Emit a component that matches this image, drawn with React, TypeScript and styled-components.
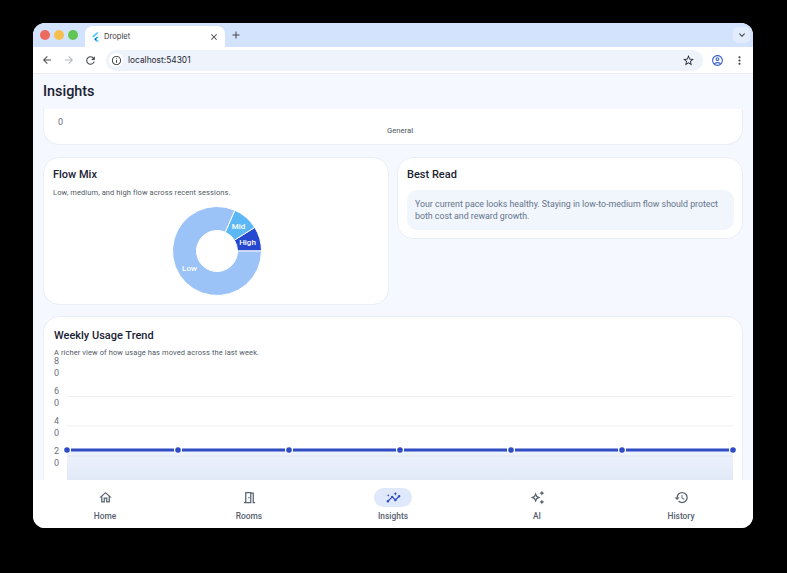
import styled, { createGlobalStyle } from "styled-components";
import {
  MdAdd, MdArrowBack, MdArrowForward, MdClose, MdExpandMore, MdHistory, MdInfoOutline, MdInsights,
  MdMoreVert, MdOutlineAccountCircle, MdOutlineAutoAwesome, MdOutlineHome, MdOutlineMeetingRoom,
  MdRefresh, MdStarBorder,
} from "react-icons/md";
import type { ReactNode } from "react";

const GlobalStyle = createGlobalStyle`
  html, body { margin: 0; height: 100%; background: #000; overflow: hidden; }
  body { font-family: Roboto, "Liberation Sans", sans-serif; }
  * { box-sizing: border-box; }
`;

const Stage = styled.div`
  width: 787px;
  height: 573px;
  padding: 23px 34px 45px 33px;
`;

const BrowserWindow = styled.div`
  height: 100%;
  display: flex;
  flex-direction: column;
  border-radius: 12px;
  overflow: hidden;
  background: #f5f8fe;
`;

const TabStrip = styled.div`
  height: 24px;
  flex: none;
  display: flex;
  align-items: flex-end;
  padding-left: 7px;
  background: #d3e3fd;
`;

const Lights = styled.div`
  display: flex;
  gap: 4px;
  align-self: center;
  margin-right: 7px;
`;

const Light = styled.span<{ $color: string }>`
  width: 10px;
  height: 10px;
  border-radius: 50%;
  background: ${(p) => p.$color};
`;

const Tab = styled.div`
  width: 140px;
  height: 21px;
  display: flex;
  align-items: center;
  padding: 0 6px;
  gap: 4px;
  background: #fff;
  border-radius: 8px 8px 0 0;
  font: 400 7.6px Inter, sans-serif;
  color: #3c4043;
`;

const TabTitle = styled.span`
  flex: 1;
`;

const NewTab = styled.span`
  display: flex;
  align-self: center;
  margin-left: 5px;
  color: #444746;
`;

const TabMenu = styled.span`
  margin-left: auto;
  margin-right: 3px;
  width: 17px;
  height: 16px;
  align-self: center;
  display: flex;
  align-items: center;
  justify-content: center;
  border-radius: 5px;
  background: #e2ecfd;
  color: #3c4043;
`;

const Toolbar = styled.div`
  height: 27px;
  flex: none;
  display: flex;
  align-items: center;
  padding: 0 6px 0 7px;
  background: #fff;
  border-bottom: 1px solid #e8ecf2;
`;

const ToolButton = styled.span<{ $faded?: boolean }>`
  width: 13px;
  height: 13px;
  flex: none;
  display: flex;
  align-items: center;
  justify-content: center;
  margin-right: 9px;
  color: ${(p) => (p.$faded ? "#b4b8bd" : "#474a4d")};
`;

const Omnibox = styled.div`
  width: 597px;
  height: 21px;
  flex: none;
  display: flex;
  align-items: center;
  padding: 0 8px 0 3px;
  gap: 5px;
  border-radius: 11px;
  background: #eff3fb;
  font: 400 8.4px Inter, sans-serif;
  color: #1f2937;
`;

const SiteInfo = styled.span`
  width: 14px;
  height: 14px;
  display: flex;
  align-items: center;
  justify-content: center;
  border-radius: 50%;
  background: #fff;
  color: #3c4043;
`;

const Address = styled.span`
  flex: 1;
`;

const ToolEnd = styled.div`
  display: flex;
  align-items: center;
  gap: 9px;
  margin-left: 8px;
  color: #474a4d;
`;

const Page = styled.main`
  flex: 1;
  min-height: 0;
  overflow: hidden;
  padding: 0 10px;
`;

const PageTitle = styled.h1`
  margin: 0;
  height: 35px;
  padding-top: 8px;
  font-size: 14.4px;
  line-height: 19px;
  font-weight: 500;
  color: #1a2233;
`;

const ClippedCard = styled.section`
  height: 36px;
  position: relative;
  display: flex;
  justify-content: center;
  padding: 17px 0 0 14px;
  margin-bottom: 12px;
  background: #fff;
  border: 1px solid #e9eef7;
  border-top: 0;
  border-radius: 0 0 16px 16px;
  font-size: 7.7px;
  color: #4b5563;
`;

const ClippedZero = styled.span`
  position: absolute;
  left: 14px;
  top: 8px;
  font-size: 9px;
  color: #6b7280;
`;

const Columns = styled.div`
  display: grid;
  grid-template-columns: 346px 346px;
  gap: 8px;
  align-items: start;
  margin-bottom: 11px;
`;

const Card = styled.section<{ $height?: number }>`
  height: ${(p) => (p.$height ? `${p.$height}px` : "auto")};
  padding: 10px 8px 8px 9px;
  background: #fff;
  border: 1px solid #e9eef7;
  border-radius: 16px;
`;

const CardTitle = styled.h2`
  margin: 0;
  font-size: 11px;
  line-height: 14px;
  font-weight: 500;
  color: #1a2233;
`;

const CardHint = styled.p`
  margin: 5px 0 0;
  font-size: 7.5px;
  line-height: 11px;
  letter-spacing: 0.09px;
  color: #525a66;
`;

const TrendHint = styled(CardHint)`
  margin-top: 4px;
`;

const PieWrap = styled.div`
  display: flex;
  justify-content: center;
  margin-top: 7.5px;
  padding-left: 1px;
`;

const ReadBox = styled.p`
  margin: 8px 0 0;
  padding: 8px;
  border-radius: 10px;
  background: #f1f5fc;
  font-size: 8.8px;
  line-height: 12px;
  color: #64748b;
`;

const TrendCard = styled(Card)`
  height: 240px;
  padding: 12px 10px;
`;

const Chart = styled.div`
  display: flex;
  margin-top: -3px;
`;

const YAxis = styled.div`
  width: 10px;
  flex: none;
  font-size: 9px;
  line-height: 12px;
  color: #6b7280;
`;

const AxisLabel = styled.div`
  width: 7px;
  height: 30px;
  word-break: break-all;
`;

const Plot = styled.svg`
  display: block;
  flex: none;
  overflow: visible;
`;

const BottomNav = styled.nav`
  height: 48px;
  flex: none;
  display: grid;
  grid-template-columns: repeat(5, 144px);
  background: #fff;
`;

const NavItem = styled.div`
  display: flex;
  flex-direction: column;
  align-items: center;
  padding-top: 8px;
  font-size: 8.4px;
  line-height: 12px;
  font-weight: 500;
  color: #566070;
`;

const NavIcon = styled.span<{ $active?: boolean }>`
  width: 38px;
  height: 19px;
  display: flex;
  align-items: center;
  justify-content: center;
  margin-bottom: 3px;
  border-radius: 10px;
  background: ${(p) => (p.$active ? "#dfe9fb" : "transparent")};
  color: ${(p) => (p.$active ? "#2f4cc4" : "#5b6472")};
`;

const polar = (r: number, deg: number) => {
  const a = (deg * Math.PI) / 180;
  return `${45 + r * Math.cos(a)} ${45 + r * Math.sin(a)}`;
};

const slice = (from: number, to: number) => {
  const large = to - from > 180 ? 1 : 0;
  return `M${polar(20.5, from)} L${polar(44.5, from)} A44.5 44.5 0 ${large} 1 ${polar(44.5, to)} L${polar(20.5, to)} A20.5 20.5 0 ${large} 0 ${polar(20.5, from)} Z`;
};

const slices = [
  { from: -32, to: 0, color: "#2647cf", label: "High", x: 75.5, y: 38.5 },
  { from: -66.4, to: -32, color: "#5bb8f5", label: "Mid", x: 66.5, y: 23 },
  { from: 0, to: 293.6, color: "#9cc3f8", label: "Low", x: 17.5, y: 65 },
];

const FlowPie = () => (
  <svg width="90" height="90" viewBox="0 0 90 90">
    {slices.map((s) => (
      <g key={s.label}>
        <path d={slice(s.from, s.to)} fill={s.color} stroke="#fff" strokeWidth="1" />
        <text x={s.x} y={s.y} fill="#fff" fontSize="8" fontWeight="500" textAnchor="middle">{s.label}</text>
      </g>
    ))}
  </svg>
);

const pointX = [3, 114, 225, 336, 447, 558, 669];

const TrendPlot = () => (
  <Plot width="672" height="130" viewBox="0 0 672 130">
    <defs>
      <linearGradient id="trendFill" x1="0" y1="0" x2="0" y2="1">
        <stop offset="0" stopColor="#eef3fc" />
        <stop offset="1" stopColor="#dfe8f7" />
      </linearGradient>
    </defs>
    <line x1="3" x2="669" y1="41.5" y2="41.5" stroke="#edf0f4" />
    <line x1="3" x2="669" y1="71" y2="71" stroke="#edf0f4" />
    <rect x="3" y="95" width="666" height="35" fill="url(#trendFill)" />
    <line x1="3" x2="669" y1="101" y2="101" stroke="#e3e9f3" />
    {pointX.slice(1).map((x, i) => (
      <line key={x} x1={pointX[i] + 4} x2={x - 4} y1="95" y2="95" stroke="#2f4cc4" strokeWidth="2.8" />
    ))}
    {pointX.map((x) => (
      <circle key={x} cx={x} cy="95" r="2.8" fill="#2f4cc4" />
    ))}
  </Plot>
);

const FlutterMark = () => (
  <svg width="9" height="10" viewBox="0 0 9 10">
    <path d="M5.5 0.5 L8 0.5 L2.5 5.5 L1 4.5 Z" fill="#54c5f8" />
    <path d="M5.5 4.8 L8 4.8 L5.4 7.2 L8 9.5 L5.5 9.5 L2.9 7.2 Z" fill="#29b6f6" />
    <path d="M4 6 L5.4 7.2 L4.2 8.4 Z" fill="#01579b" />
  </svg>
);

const navItems: { label: string; icon: ReactNode; active?: boolean }[] = [
  { label: "Home", icon: <MdOutlineHome size={15} /> },
  { label: "Rooms", icon: <MdOutlineMeetingRoom size={15} /> },
  { label: "Insights", icon: <MdInsights size={15} />, active: true },
  { label: "AI", icon: <MdOutlineAutoAwesome size={15} /> },
  { label: "History", icon: <MdHistory size={15} /> },
];

export default function App() {
  return (
    <Stage>
      <GlobalStyle />
      <BrowserWindow>
        <TabStrip>
          <Lights>
            <Light $color="#ec6a5e" />
            <Light $color="#f4bf4f" />
            <Light $color="#61c554" />
          </Lights>
          <Tab>
            <FlutterMark />
            <TabTitle>Droplet</TabTitle>
            <MdClose size={10} />
          </Tab>
          <NewTab><MdAdd size={12} /></NewTab>
          <TabMenu><MdExpandMore size={12} /></TabMenu>
        </TabStrip>
        <Toolbar>
          <ToolButton><MdArrowBack size={12} /></ToolButton>
          <ToolButton $faded><MdArrowForward size={12} /></ToolButton>
          <ToolButton><MdRefresh size={13} /></ToolButton>
          <Omnibox>
            <SiteInfo><MdInfoOutline size={11} /></SiteInfo>
            <Address>localhost:54301</Address>
            <MdStarBorder size={13} />
          </Omnibox>
          <ToolEnd>
            <MdOutlineAccountCircle size={13} color="#3f63c9" />
            <MdMoreVert size={13} />
          </ToolEnd>
        </Toolbar>
        <Page>
          <PageTitle>Insights</PageTitle>
          <ClippedCard>
            <ClippedZero>0</ClippedZero>
            General
          </ClippedCard>
          <Columns>
            <Card $height={148}>
              <CardTitle>Flow Mix</CardTitle>
              <CardHint>Low, medium, and high flow across recent sessions.</CardHint>
              <PieWrap><FlowPie /></PieWrap>
            </Card>
            <Card>
              <CardTitle>Best Read</CardTitle>
              <ReadBox>Your current pace looks healthy. Staying in low-to-medium flow should protect both cost and reward growth.</ReadBox>
            </Card>
          </Columns>
          <TrendCard>
            <CardTitle>Weekly Usage Trend</CardTitle>
            <TrendHint>A richer view of how usage has moved across the last week.</TrendHint>
            <Chart>
              <YAxis>
                <AxisLabel>80</AxisLabel>
                <AxisLabel>60</AxisLabel>
                <AxisLabel>40</AxisLabel>
                <AxisLabel>20</AxisLabel>
              </YAxis>
              <TrendPlot />
            </Chart>
          </TrendCard>
        </Page>
        <BottomNav>
          {navItems.map((item) => (
            <NavItem key={item.label}>
              <NavIcon $active={item.active}>{item.icon}</NavIcon>
              {item.label}
            </NavItem>
          ))}
        </BottomNav>
      </BrowserWindow>
    </Stage>
  );
}
